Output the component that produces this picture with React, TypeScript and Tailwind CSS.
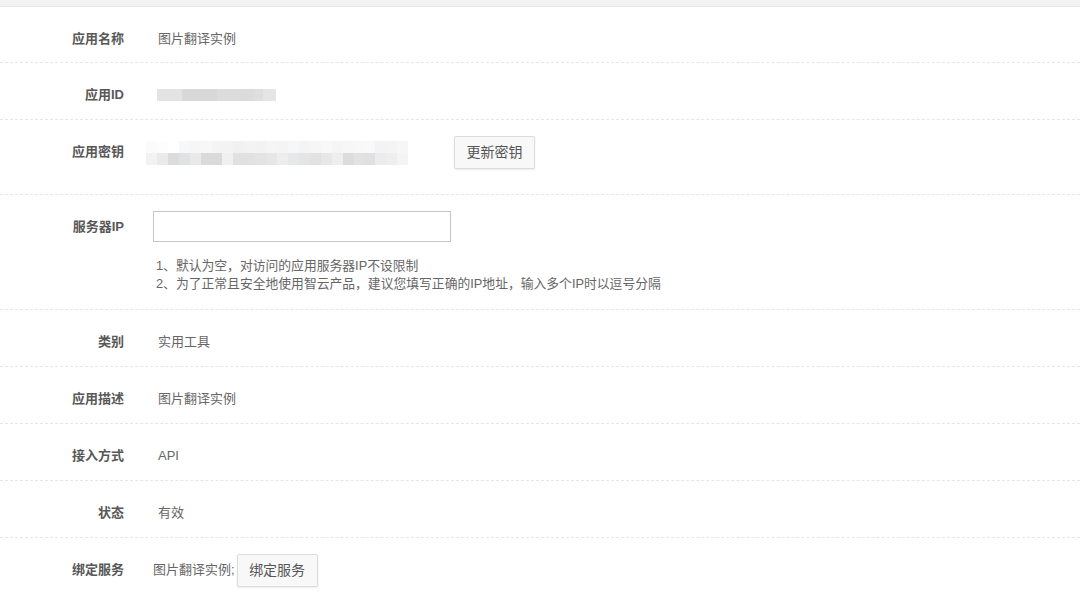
import React from "react";

const font = "font-['Liberation_Sans','Noto_Sans_CJK_SC',sans-serif]";

const idBlocks: [number, string][] = [
  [25, "#e3e3e3"],
  [35, "#d8d8d8"],
  [23, "#dcdcdc"],
  [13, "#dbdbdb"],
  [10, "#e1dddc"],
  [13, "#e5e5e7"],
];

const keyTop = [
  "#fbfbfb", "#fdfdfd", "#ffffff", "#f8f8f8", "#f6f6f6", "#f7f7f7", "#f4f4f4", "#f3f3f3",
  "#f1f1f1", "#f3f3f3", "#f2f2f2", "#f5f5f5", "#f4f4f4", "#f7f7f7", "#f4f4f4", "#f6f6f6",
  "#f8f8f8", "#f5f5f5", "#f7f7f7", "#f8f8f8", "#f9f9f9", "#f3f3f3", "#f4f4f4", "#f6f6f6",
];
const keyBottom = [
  "#f2f2f2", "#eaeaea", "#dcdcdc", "#e0e2e4", "#e9e9e9", "#dadada", "#dadada", "#f0f0f0",
  "#e1e1e1", "#e1e1e1", "#e3e3e3", "#e6e6e6", "#ededed", "#e6e8ea", "#e4e4e4", "#e2e2e2",
  "#e7e7e7", "#eeeeee", "#dcdcdc", "#e2e2e2", "#dfe0e2", "#ececec", "#eeeeee", "#f4f4f4",
];

const Label: React.FC<{ children: React.ReactNode }> = ({ children }) => (
  <div className="w-[124px] shrink-0 pt-[6px] text-right text-[13px] font-bold leading-5 text-[#585858]">
    {children}
  </div>
);

const Row: React.FC<{ h: string; children: React.ReactNode }> = ({ h, children }) => (
  <div className={`flex items-start border-b border-dashed border-[#e6e6e6] pt-4 ${h}`}>{children}</div>
);

const Value: React.FC<{ children: React.ReactNode }> = ({ children }) => (
  <div className="ml-[34px] pt-[6px] text-[13px] leading-5 text-[#666]">{children}</div>
);

const Btn: React.FC<{ children: React.ReactNode }> = ({ children }) => (
  <button className="h-[33px] w-[81px] rounded-[2px] border border-[#dcdcdc] bg-[#f8f8f8] text-[14px] text-[#555] shadow-[0_1px_2px_rgba(0,0,0,0.08)]">
    {children}
  </button>
);

export default function App() {
  return (
    <div className={`min-h-screen w-full overflow-hidden bg-white ${font}`}>
      <div className="h-[7px] border-b border-[#e6e6e6] bg-[#f3f3f3]" />

      <Row h="h-[56px]">
        <Label>应用名称</Label>
        <Value>图片翻译实例</Value>
      </Row>

      <Row h="h-[57px]">
        <Label>应用ID</Label>
        <div className="ml-[33px] mt-[10px] flex h-[12px]">
          {idBlocks.map(([w, c], i) => (
            <div key={i} style={{ width: w, background: c }} />
          ))}
        </div>
      </Row>

      <Row h="h-[75px]">
        <Label>应用密钥</Label>
        <div className="ml-[22px] mt-[5px] flex w-[262px] flex-col">
          <div className="flex h-[12px]">
            {keyTop.map((c, i) => (
              <div key={i} className="flex-1" style={{ background: c }} />
            ))}
          </div>
          <div className="flex h-[12px]">
            {keyBottom.map((c, i) => (
              <div key={i} className="flex-1" style={{ background: c }} />
            ))}
          </div>
        </div>
        <div className="ml-[46px]">
          <Btn>更新密钥</Btn>
        </div>
      </Row>

      <Row h="h-[115px]">
        <Label>服务器IP</Label>
        <div className="ml-[29px] flex flex-col">
          <input className="h-[31px] w-[298px] border border-[#c4c4c4] bg-white px-2 text-[13px] outline-none" />
          <div className="mt-[15px] pl-[3px] text-[12.8px] leading-[18px] text-[#666]">
            <div>1、默认为空，对访问的应用服务器IP不设限制</div>
            <div>2、为了正常且安全地使用智云产品，建议您填写正确的IP地址，输入多个IP时以逗号分隔</div>
          </div>
        </div>
      </Row>

      <Row h="h-[57px]">
        <Label>类别</Label>
        <Value>实用工具</Value>
      </Row>

      <Row h="h-[57px]">
        <Label>应用描述</Label>
        <Value>图片翻译实例</Value>
      </Row>

      <Row h="h-[57px]">
        <Label>接入方式</Label>
        <Value>API</Value>
      </Row>

      <Row h="h-[57px]">
        <Label>状态</Label>
        <Value>有效</Value>
      </Row>

      <div className="flex items-start pt-4">
        <Label>绑定服务</Label>
        <div className="ml-[29px] pt-[6px] text-[13px] leading-5 text-[#666]">图片翻译实例;</div>
        <div className="ml-[2px]">
          <Btn>绑定服务</Btn>
        </div>
      </div>
    </div>
  );
}
